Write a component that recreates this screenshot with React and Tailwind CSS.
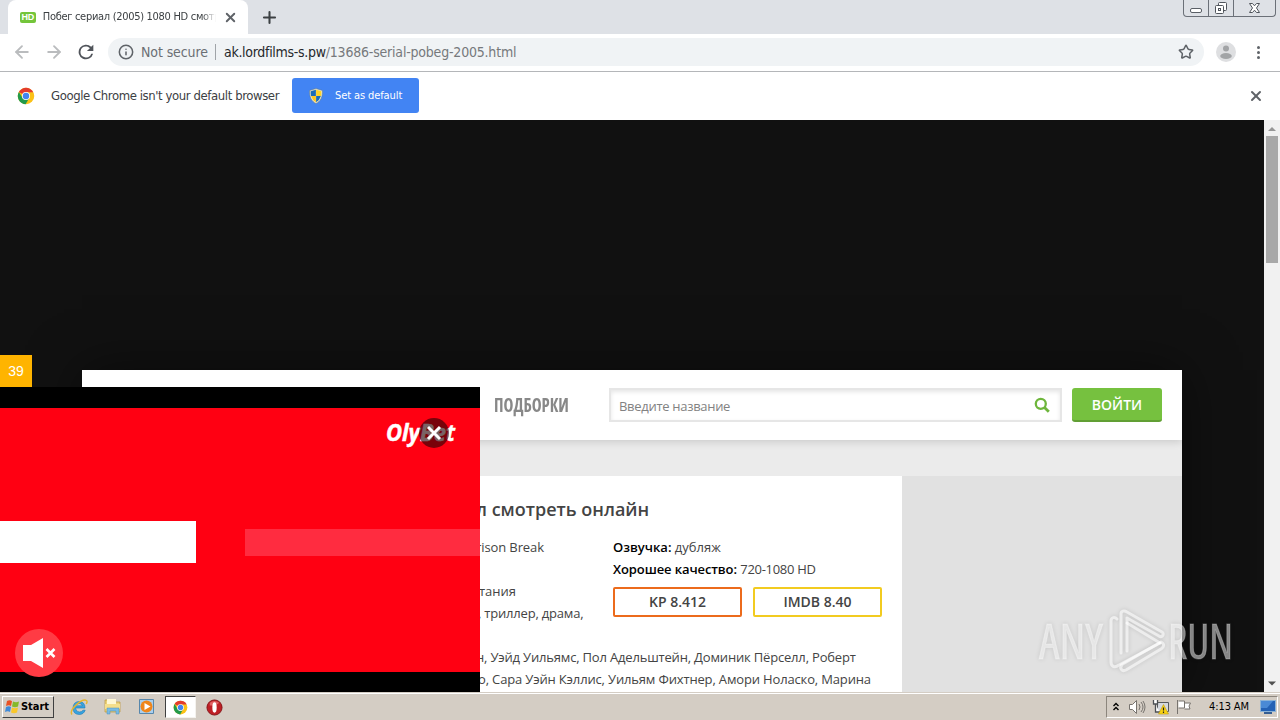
import { ArrowLeft, ArrowRight, Info, Plus, Star, X } from "lucide-react";

const uiFont = "font-['DejaVu_Sans_Condensed','DejaVu_Sans',sans-serif] [font-stretch:condensed]";

function ChromeLogo({ className }) {
  return (
    <svg viewBox="0 0 24 24" className={className}>
      <circle cx="12" cy="12" r="11" fill="#fbc116" />
      <path d="M12 12 2.5 6.5A11 11 0 0 1 21.5 6.5L21.5 7H12Z" fill="#e33b2e" />
      <path d="M12 12 7.5 14.6 2.5 6.5A11 11 0 0 0 11.5 23L16.3 14.5Z" fill="#229a4b" />
      <circle cx="12" cy="12" r="5.4" fill="#fff" />
      <circle cx="12" cy="12" r="4.3" fill="#4284ef" />
    </svg>
  );
}

function Shield() {
  return (
    <svg viewBox="0 0 16 16" className="w-4 h-4">
      <path d="M8 .5 14.5 2.500C14.800 9 12.500 13.500 8 15.500 3.500 13.500 1.200 9 1.500 2.500Z" fill="#e8e4c8" stroke="#54728c" strokeWidth=".5" />
      <path d="M7.900 1.800 2.700 3.300Q2.600 6 3 7.900H7.900Z" fill="#1c6cb8" />
      <path d="M8.100 1.800 13.300 3.300Q13.400 6 13 7.900H8.100Z" fill="#ffd328" />
      <path d="M3.100 8.100H7.900V14.200Q4.500 12.500 3.100 8.100Z" fill="#ffc71e" />
      <path d="M12.900 8.100H8.100V14.200Q11.500 12.500 12.900 8.100Z" fill="#1c6cb8" />
    </svg>
  );
}

function TabStrip() {
  return (
    <div className="h-[34px] shrink-0 bg-[#dee1e6] flex pl-2">
      <div className="w-[240px] h-full bg-white rounded-t-lg flex items-center pl-3 pr-[10px]">
        <span className="w-4 h-[11px] rounded-[2px] bg-[#74c53b] text-white text-[9px] leading-[11px] text-center font-bold font-['Liberation_Sans',sans-serif]">
          HD
        </span>
        <span className="ml-[7px] w-[176px] overflow-hidden whitespace-nowrap text-[11px] tracking-[-0.3px] text-[#3c4043] [mask-image:linear-gradient(to_right,black_92%,transparent)]">
          Побег сериал (2005) 1080 HD смотр
        </span>
        <X className="ml-[7px] w-[15px] h-[15px] shrink-0 text-[#5f6368]" strokeWidth={3} />
      </div>
      <div className="flex items-center pl-[12px]">
        <Plus className="w-[19px] h-[19px] text-[#3c4043]" strokeWidth={2.6} />
      </div>
      <div className="ml-auto mr-[4px] w-[93px] h-[17px] flex border border-t-0 border-[#6b7078] rounded-b-[4px]">
        <div className="w-[25px] border-r border-[#6b7078] flex justify-center pt-[8px]">
          <span className="w-[12px] h-[5px] border border-[#5a5f66] rounded-[2px] bg-white" />
        </div>
        <div className="w-[25px] border-r border-[#6b7078] flex justify-center pt-[1px]">
          <svg viewBox="0 0 14 14" className="w-[14px] h-[14px]" fill="#fff" stroke="#50555c">
            <rect x="4.500" y="1.500" width="8" height="8" rx="1" />
            <rect x="1.500" y="4.500" width="8" height="8" rx="1" />
            <rect x="4.500" y="7.500" width="2" height="2" />
          </svg>
        </div>
        <div className="flex-1 flex justify-center pt-[2px]">
          <svg viewBox="0 0 14 12" className="w-[14px] h-[12px]" fill="#fff" stroke="#50555c">
            <path d="M1.500 1.500H4.500L6.500 3.800 8.500 1.500H11.500L8.500 6 11.500 10.500H8.500L6.500 8.200 4.500 10.500H1.500L4.500 6Z" />
          </svg>
        </div>
      </div>
    </div>
  );
}

function Toolbar() {
  return (
    <div className="h-[38px] shrink-0 bg-white border-b border-[#b4b6b9] flex items-center pl-[12px] pb-px">
      <ArrowLeft className="w-5 h-5 text-[#babcbe]" strokeWidth={2.2} />
      <ArrowRight className="ml-3 w-5 h-5 text-[#babcbe]" strokeWidth={2.2} />
      <svg viewBox="0 0 24 24" className="ml-[11px] w-[22px] h-[22px]" fill="#50545a">
        <path d="M17.650 6.350A8 8 0 1 0 19.730 14H17.650A6 6 0 1 1 12 6c1.660 0 3.140.690 4.220 1.780L13 11h7V4z" />
      </svg>
      <div className="ml-[11px] w-[1096px] h-7 rounded-full bg-[#f0f3f5] flex items-center pl-[10px] text-[14px] whitespace-nowrap">
        <Info className="w-4 h-4 text-[#5f6368]" strokeWidth={2.3} />
        <span className="ml-[7px] w-[67px] tracking-[-0.1px] text-[#6b6f74]">Not secure</span>
        <span className="ml-[7px] w-px h-4 bg-[#a0a4a8]" />
        <span className="ml-[8px] tracking-[-0.3px] text-[#25282b]">ak.lordfilms-s.pw</span>
        <span className="tracking-[-0.2px] text-[#76797c]">/13686-serial-pobeg-2005.html</span>
        <Star className="ml-auto mr-[10px] w-4 h-4 text-[#5f6368]" strokeWidth={2.3} />
      </div>
      <svg viewBox="0 0 20 20" className="ml-[12px] w-5 h-5">
        <circle cx="10" cy="10" r="10" fill="#dedfe1" />
        <circle cx="10" cy="6.500" r="3" fill="#a2a4a6" />
        <ellipse cx="10" cy="14" rx="5.800" ry="3" fill="#a2a4a6" />
      </svg>
      <div className="ml-[21px] flex flex-col gap-[2px]">
        <span className="w-[3px] h-[3px] rounded-full bg-[#5f6368]" />
        <span className="w-[3px] h-[3px] rounded-full bg-[#5f6368]" />
        <span className="w-[3px] h-[3px] rounded-full bg-[#5f6368]" />
      </div>
    </div>
  );
}

function DefaultBrowserBar() {
  return (
    <div className="h-12 shrink-0 bg-white flex items-center pl-[17px] pr-[16px] pb-px">
      <ChromeLogo className="w-[18px] h-[18px]" />
      <span className="ml-4 w-[229px] whitespace-nowrap text-[13px] tracking-[-0.41px] text-[#3c4043]">
        Google Chrome isn't your default browser
      </span>
      <button className="ml-[12px] w-[127px] h-[35px] rounded-[3px] bg-[#4284f3] flex items-center pl-4 text-[11px] tracking-[-0.1px] text-white">
        <Shield />
        <span className="ml-[11px] pt-px">Set as default</span>
      </button>
      <X className="ml-auto w-[16px] h-[16px] text-[#5f6368]" strokeWidth={3} />
    </div>
  );
}

function SiteHeader() {
  return (
    <div className="relative h-[70px] bg-white shadow-[0_2px_8px_rgba(0,0,0,0.14)] flex items-center pl-[412px]">
      <div className="w-[115px]">
        <span className="inline-block origin-left scale-x-[0.88] text-[19px] font-bold text-[#888] [font-stretch:condensed]">
          ПОДБОРКИ
        </span>
      </div>
      <div className="w-[453px] h-[34px] bg-white border-2 border-[#e6e6e6] shadow-[inset_0_2px_4px_rgba(0,0,0,0.1)] flex items-center pl-2 pr-[10px]">
        <span className="text-[13px] tracking-[-0.3px] pt-[4px] text-[#828282]">Введите название</span>
        <svg viewBox="0 0 16 16" className="ml-auto w-4 h-4" fill="none" stroke="#6eb63c">
          <circle cx="6.800" cy="6.800" r="5" strokeWidth="2.300" />
          <path d="m10.500 10.500 4.300 4.300" strokeWidth="2.800" />
        </svg>
      </div>
      <button className="ml-[10px] w-[90px] h-[34px] rounded-[3px] bg-[#76c13f] border-b-2 border-[#619f34] text-[14px] font-semibold text-white">
        ВОЙТИ
      </button>
    </div>
  );
}

function MovieCard() {
  return (
    <div className="w-[820px] h-[220px] bg-white pl-[394px] pt-[20px] text-[13px] leading-[22px] text-[#444] whitespace-nowrap">
      <h1 className="text-[18px] leading-[26px] font-semibold">л смотреть онлайн</h1>
      <div className="flex mt-[14px] h-[88px]">
        <div className="w-[137px]">
          <p className="tracking-[-0.1px]">rison Break</p>
          <p className="mt-[22px] pl-[3px]">тания</p>
          <p className="pl-[2px] tracking-[-0.2px]">, триллер, драма,</p>
        </div>
        <div>
          <p><b className="font-semibold text-black">Озвучка:</b> дубляж</p>
          <p>
            <b className="font-semibold text-black tracking-[-0.1px]">Хорошее качество:</b>{" "}
            <span className="tracking-[-0.3px]">720-1080 HD</span>
          </p>
          <div className="mt-[7px] flex gap-[11px] text-[14px] leading-[26px] font-semibold text-center">
            <span className="w-[129px] h-[30px] border-2 border-[#ec6b1c] rounded-[2px]">KP 8.412</span>
            <span className="w-[129px] h-[30px] border-2 border-[#f2cb20] rounded-[2px]">IMDB 8.40</span>
          </div>
        </div>
      </div>
      <p className="mt-[22px] tracking-[-0.18px]">н, Уэйд Уильямс, Пол Адельштейн, Доминик Пёрселл, Роберт</p>
      <p className="pl-[2px] tracking-[-0.155px]">о, Сара Уэйн Кэллис, Уильям Фихтнер, Амори Ноласко, Марина</p>
    </div>
  );
}

function VideoAd() {
  return (
    <div className="absolute left-0 bottom-0 w-[480px]">
      <div className="w-8 h-8 bg-[#ffb400] text-white text-[14px] leading-8 text-center font-['Liberation_Sans',sans-serif]">39</div>
      <div className="h-[305px] bg-black pt-[21px]">
        <div className="relative h-[264px] bg-[#ff0012]">
          <div className="flex items-center pt-[113px]">
            <div className="w-[196px] h-[42px] bg-white" />
            <div className="ml-[49px] flex-1 h-[27px] bg-[#ff2c40]" />
          </div>
          <svg viewBox="0 0 80 36" className="absolute left-[380px] top-[8px] w-[80px] h-[36px]">
            <text x="6" y="25" fill="#fff" stroke="#fff" strokeWidth=".5" fontFamily="Open Sans, sans-serif" fontSize="23" fontWeight="700" fontStyle="italic" textLength="69" lengthAdjust="spacingAndGlyphs">OlyBet</text>
            <circle cx="54" cy="17" r="15" fill="#260306" fillOpacity=".62" />
            <path d="m48 11 12 12m0-12-12 12" stroke="#fff" strokeWidth="3" />
          </svg>
          <svg viewBox="0 0 48 48" className="absolute left-[15px] top-[221px] w-12 h-12">
            <circle cx="24" cy="24" r="24" fill="#ff3b44" />
            <path d="M8 16h8l12-7v30l-12-7H8Z" fill="#fff" />
            <path d="m31.500 20 8 8m0-8-8 8" stroke="#fff" strokeWidth="2.600" />
          </svg>
        </div>
      </div>
    </div>
  );
}

function Watermark() {
  return (
    <svg viewBox="0 0 210 70" className="absolute left-[1030px] top-[485px] w-[210px] h-[70px] drop-shadow-[0_0_2px_rgba(0,0,0,0.22)]">
      <g fill="#fff" fillOpacity=".5" stroke="#fff" strokeOpacity=".25" strokeWidth="1" className="[font-stretch:condensed]" fontFamily="Open Sans, sans-serif" fontSize="50">
        <text x="9" y="54" textLength="64" lengthAdjust="spacingAndGlyphs">ANY</text>
        <text x="138" y="54" textLength="65" lengthAdjust="spacingAndGlyphs">RUN</text>
      </g>
      <g fill="none" stroke="#fff" strokeOpacity=".6" strokeWidth="3" strokeLinejoin="round" strokeLinecap="round">
        <path d="M87 14c-3-3-6-1-6 2v41c0 5 4 6 8 3l41-22" />
        <path d="M91 48V9c0-3 3-4 6-2l35 20c3 2 0 6-3 4L97 13v33" />
        <path d="m97 18 33 20" />
        <path d="m91 60 40-23c4 2 3 5 0 7L96 65c-4 2-7-2-4-5" />
      </g>
    </svg>
  );
}

function Scrollbar() {
  return (
    <div className="w-4 bg-[#f1f1f1] flex flex-col items-center">
      <svg viewBox="0 0 16 16" className="w-4 h-4"><path d="m4 11 4-4 4 4Z" fill="#969696" /></svg>
      <div className="w-3 h-[127px] bg-[#a8a8a8]" />
      <svg viewBox="0 0 16 16" className="mt-auto w-4 h-[17px]"><path d="m4 6 4 4 4-4Z" fill="#505050" /></svg>
    </div>
  );
}

function Taskbar() {
  return (
    <div className="h-7 shrink-0 bg-[#d4cdc4] border-t border-[#d4cdc4] shadow-[inset_0_1px_0_#fff] flex items-center pl-[2px] pt-px text-black">
      <button className="w-[52px] h-[22px] border border-t-white border-l-white border-r-[#404040] border-b-[#404040] flex items-center pl-px text-[11px] font-bold tracking-[-0.05px]">
        <svg viewBox="0 0 16 16" className="w-4 h-4 shrink-0">
          <path d="M3 2q3-1.500 5 .2L7 7Q5 5.500 2 7Z" fill="#e95123" />
          <path d="M9 2.600q3 1.500 6 0L14 7.500q-3 1.500-6 0Z" fill="#85b92a" />
          <path d="M2 8q3-1.500 5 0l-1 5q-2-1.500-5-.1Z" fill="#3f8ad8" />
          <path d="M8 8.500q3 1.500 6 0l-1 5q-3 1.500-6 0Z" fill="#f9c72b" />
        </svg>
        <span className="ml-px">Start</span>
      </button>
      <svg viewBox="0 0 20 20" className="ml-[15px] w-5 h-5" fill="none">
        <path d="M16 11H6.500q.3 4 4 4 2.500 0 3.500-1.800h2.200Q14.500 17.500 10.300 17.500 4 17.300 4 11 4.300 4.500 10.300 4.500 16 4.800 16 11ZM6.700 8.800h6.700Q12.700 6.500 10.200 6.500T6.700 8.800Z" fill="#37a4df" stroke="#1977b8" strokeWidth=".6" />
        <path d="M3 17.500C-.5 13 13 1 17.500 3.500c1 .8.600 2-.2 3.500" stroke="#e7b52d" strokeWidth="1.400" />
      </svg>
      <svg viewBox="0 0 20 20" className="ml-[14px] w-5 h-5">
        <path d="M2 3h6l1 2h8v10H2Z" fill="#ead27a" stroke="#bc9a3e" strokeWidth=".7" />
        <path d="M4 2h9v8H4Z" fill="#fff8d5" />
        <path d="M2 7h15v5H2Z" fill="#f5df8c" />
        <path d="M4 17v-6h12v6h-3v-3H7v3Z" fill="#7abbe3" stroke="#4d91bb" strokeWidth=".5" />
      </svg>
      <svg viewBox="0 0 18 18" className="ml-[15px] w-[18px] h-[18px]">
        <path d="M1.500 1.500h14v14h-14Z" fill="#a9cfee" stroke="#5787ac" />
        <circle cx="8.500" cy="8.500" r="6" fill="#ef861b" />
        <path d="m6.500 5 6 3.500-6 3.500Z" fill="#fff" />
      </svg>
      <div className="ml-[9px] w-[31px] h-[22px] bg-white border border-t-[#404040] border-l-[#404040] border-r-[#f4f2ee] border-b-[#f4f2ee] flex items-center justify-center">
        <ChromeLogo className="w-[15px] h-[15px]" />
      </div>
      <svg viewBox="0 0 18 18" className="ml-[10px] w-[17px] h-[17px]">
        <circle cx="9" cy="9" r="8" fill="#be1f25" stroke="#841216" />
        <path d="M4 4q5-4 10 0-2 3-10 3Z" fill="#e05f62" />
        <ellipse cx="9" cy="9" rx="2.300" ry="5.500" fill="#fff" />
      </svg>
      <div className="ml-auto mr-[2px] w-[172px] h-[22px] border border-t-[#8c867d] border-l-[#8c867d] border-b-white border-r-white flex items-center">
        <svg viewBox="0 0 8 12" className="ml-[5px] w-2 h-3" fill="none" stroke="#000" strokeWidth="1.400">
          <path d="m1.500 5 2.500-2.500L6.500 5m-5 4L4 6.500 6.500 9" />
        </svg>
        <svg viewBox="0 0 18 18" className="ml-[8px] w-[18px] h-[18px]" fill="none" stroke="#77736e">
          <path d="M1.500 6.500h3l4-4v13l-4-4h-3Z" fill="#fff" />
          <path d="M11 6q2 3 0 6m2-8q4 5 0 10m2-11q4 6 0 12" />
        </svg>
        <svg viewBox="0 0 18 18" className="ml-[6px] w-[18px] h-[18px]">
          <path d="M5.500 4.500h11v9h-11Z" fill="#d5d9df" stroke="#55595d" />
          <path d="M1.500 2v4h4V2M3.500 6v8h4" fill="#fff" stroke="#4c5054" strokeWidth="1.300" />
          <path d="m11.500 6.500 5 9.500H6.500Z" fill="#f9d313" stroke="#bd9a12" strokeWidth=".6" />
          <path d="M11.500 9.500v3m0 1v1.500" stroke="#222" strokeWidth="1.200" />
        </svg>
        <svg viewBox="0 0 18 18" className="ml-[5px] w-[18px] h-[18px]" fill="#fff" stroke="#77736e">
          <path d="M2.500 2v14M3.500 3h6v7h-6m6-5h6L14 8l1 3H9.500" />
        </svg>
        <span className="ml-[16px] w-[42px] whitespace-nowrap text-[11px] tracking-[-0.1px]">4:13 AM</span>
        <svg viewBox="0 0 16 14" className="ml-[9px] w-4 h-[14px]">
          <rect x=".5" y=".5" width="15" height="11" fill="#2462b5" stroke="#8cb3d6" />
          <path d="m1 1h12L7 8H1Z" fill="#4a8ad5" />
          <path d="M4 12h8v2H4Z" fill="#355e93" />
        </svg>
      </div>
    </div>
  );
}

function App() {
  return (
    <div className={`w-[1280px] h-[720px] overflow-hidden flex flex-col ${uiFont}`}>
      <TabStrip />
      <Toolbar />
      <DefaultBrowserBar />
      <div className="relative h-[572px] shrink-0 flex bg-[#111] overflow-hidden font-['Open_Sans',sans-serif] [font-stretch:normal]">
        <div className="flex-1 pt-[250px] pl-[82px]">
          <div className="w-[1100px] h-[322px] bg-[#ebebeb] shadow-[0_0_50px_rgba(0,0,0,0.5)] overflow-hidden">
            <SiteHeader />
            <div className="mt-9 bg-[#e1e1e1]">
              <MovieCard />
            </div>
          </div>
        </div>
        <Scrollbar />
        <VideoAd />
        <Watermark />
      </div>
      <Taskbar />
    </div>
  );
}

export default App;
